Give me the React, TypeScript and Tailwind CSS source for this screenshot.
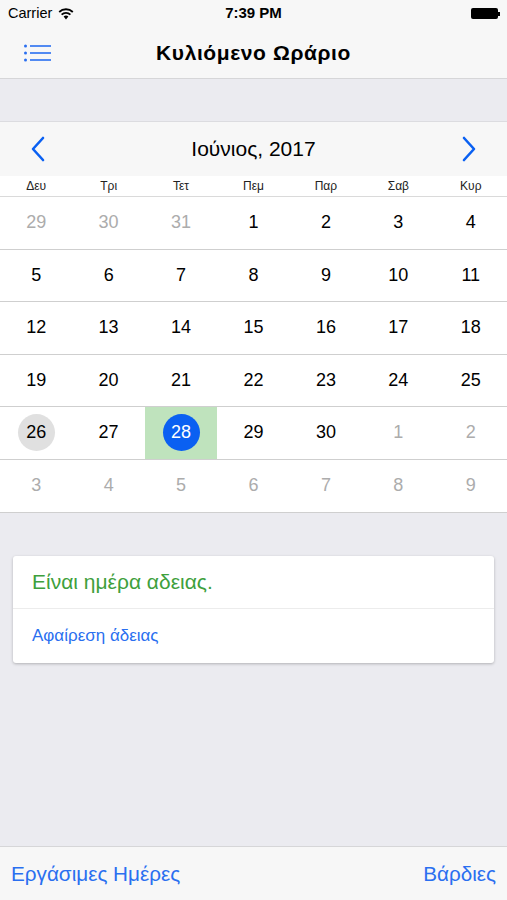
import React from 'react';

type Day = { n: number; muted?: boolean };

const weeks: Day[][] = [
    [{ n: 29, muted: true }, { n: 30, muted: true }, { n: 31, muted: true }, { n: 1 }, { n: 2 }, { n: 3 }, { n: 4 }],
    [5, 6, 7, 8, 9, 10, 11].map((n) => ({ n })),
    [12, 13, 14, 15, 16, 17, 18].map((n) => ({ n })),
    [19, 20, 21, 22, 23, 24, 25].map((n) => ({ n })),
    [{ n: 26 }, { n: 27 }, { n: 28 }, { n: 29 }, { n: 30 }, { n: 1, muted: true }, { n: 2, muted: true }],
    [3, 4, 5, 6, 7, 8, 9].map((n) => ({ n, muted: true })),
];

const weekdays = ['Δευ', 'Τρι', 'Τετ', 'Πεμ', 'Παρ', 'Σαβ', 'Κυρ'];

const DayCell: React.FC<{ day: Day; row: number }> = ({ day, row }) => {
    const isToday = row === 4 && day.n === 26;
    const isSelected = row === 4 && day.n === 28;

    return (
        <div className={`flex items-center justify-center ${isSelected ? 'bg-[#bfe3bd]' : ''}`}>
            {isToday ? (
                <span className="w-[37px] h-[37px] rounded-full bg-[#e0e0e0] flex items-center justify-center text-[18px] text-black">
                    {day.n}
                </span>
            ) : isSelected ? (
                <span className="w-[37px] h-[37px] rounded-full bg-[#0a60f2] flex items-center justify-center text-[18px] text-white">
                    {day.n}
                </span>
            ) : (
                <span className={`text-[18px] ${day.muted ? 'text-[#acacac]' : 'text-black'}`}>{day.n}</span>
            )}
        </div>
    );
};

const App: React.FC = () => {
    return (
        <div
            className="w-[507px] h-[900px] flex flex-col bg-[#ebebf0] overflow-hidden"
            style={{ fontFamily: '"Liberation Sans", Arial, sans-serif' }}
        >
            {/* Status bar */}
            <div className="h-[27px] bg-[#f7f7f7] flex items-center justify-between pl-[8px] pr-[7px] relative">
                <div className="flex items-center gap-[6px] text-[14.5px] text-black">
                    <span>Carrier</span>
                    <svg width="16" height="12" viewBox="0 0 16 12">
                        <path d="M8 11.5 L5.6 8.6 A3.6 3.6 0 0 1 10.4 8.6 Z" fill="black" />
                        <path d="M3.6 6.6 A6.4 6.4 0 0 1 12.4 6.6" stroke="black" strokeWidth="1.8" fill="none" />
                        <path d="M1.2 4 A9.8 9.8 0 0 1 14.8 4" stroke="black" strokeWidth="1.8" fill="none" />
                    </svg>
                </div>
                <span className="absolute left-1/2 -translate-x-1/2 text-[15px] font-bold text-black">7:39 PM</span>
                <div className="flex items-center">
                    <div className="w-[27px] h-[11px] bg-black rounded-[2px]" />
                    <div className="w-[2px] h-[4px] bg-black" />
                </div>
            </div>

            {/* Nav bar */}
            <div className="h-[52px] bg-[#f7f7f7] border-b border-[#d6d6d8] flex items-center relative">
                <svg className="ml-[24px]" width="28" height="18" viewBox="0 0 28 18">
                    <circle cx="1.5" cy="2" r="1.5" fill="#2a6ff0" />
                    <circle cx="1.5" cy="9" r="1.5" fill="#2a6ff0" />
                    <circle cx="1.5" cy="16" r="1.5" fill="#2a6ff0" />
                    <rect x="6" y="1.2" width="21" height="1.6" fill="#2a6ff0" />
                    <rect x="6" y="8.2" width="21" height="1.6" fill="#2a6ff0" />
                    <rect x="6" y="15.2" width="21" height="1.6" fill="#2a6ff0" />
                </svg>
                <span className="absolute left-1/2 -translate-x-1/2 text-[21px] font-bold text-black tracking-[0.6px] whitespace-nowrap">
                    Κυλιόμενο Ωράριο
                </span>
            </div>

            <div className="h-[43px] border-b border-[#dcdce0]" />

            {/* Calendar */}
            <div className="bg-white border-b border-[#cfcfcf]">
                <div className="h-[54px] bg-[#f7f7f7] flex items-center justify-between px-[30px]">
                    <svg width="16" height="26" viewBox="0 0 16 26">
                        <path d="M13 2 L3 13 L13 24" stroke="#0a60f2" strokeWidth="2.6" fill="none" strokeLinecap="round" strokeLinejoin="round" />
                    </svg>
                    <span className="text-[21px] text-black">Ιούνιος, 2017</span>
                    <svg width="16" height="26" viewBox="0 0 16 26">
                        <path d="M3 2 L13 13 L3 24" stroke="#0a60f2" strokeWidth="2.6" fill="none" strokeLinecap="round" strokeLinejoin="round" />
                    </svg>
                </div>
                <div className="h-[21px] grid grid-cols-7 border-b border-[#dadada]">
                    {weekdays.map((w) => (
                        <div key={w} className="flex items-center justify-center text-[12px] text-[#222]">
                            {w}
                        </div>
                    ))}
                </div>
                {weeks.map((week, r) => (
                    <div
                        key={r}
                        className={`h-[52.5px] grid grid-cols-7 ${r < weeks.length - 1 ? 'border-b border-[#cfcfcf]' : ''}`}
                    >
                        {week.map((d, i) => (
                            <DayCell key={i} day={d} row={r} />
                        ))}
                    </div>
                ))}
            </div>

            {/* Info card */}
            <div className="mt-[43px] mx-[13px] bg-white rounded-[3px] shadow-[0_1px_3px_rgba(0,0,0,0.25)]">
                <div className="h-[53px] flex items-center px-[19px] border-b border-[#ececec]">
                    <span className="text-[21px] text-[#3ea03c]">Είναι ημέρα αδειας.</span>
                </div>
                <div className="h-[54px] flex items-center px-[19px]">
                    <span className="text-[17px] text-[#2a6ff0]">Αφαίρεση άδειας</span>
                </div>
            </div>

            <div className="flex-1" />

            {/* Bottom toolbar */}
            <div className="h-[54px] bg-[#f7f7f7] border-t border-[#d6d6d8] flex items-center justify-between pl-[11px] pr-[11px]">
                <span className="text-[20.7px] text-[#2a6ff0]">Εργάσιμες Ημέρες</span>
                <span className="text-[20.7px] text-[#2a6ff0]">Βάρδιες</span>
            </div>
        </div>
    );
};

export default App;
